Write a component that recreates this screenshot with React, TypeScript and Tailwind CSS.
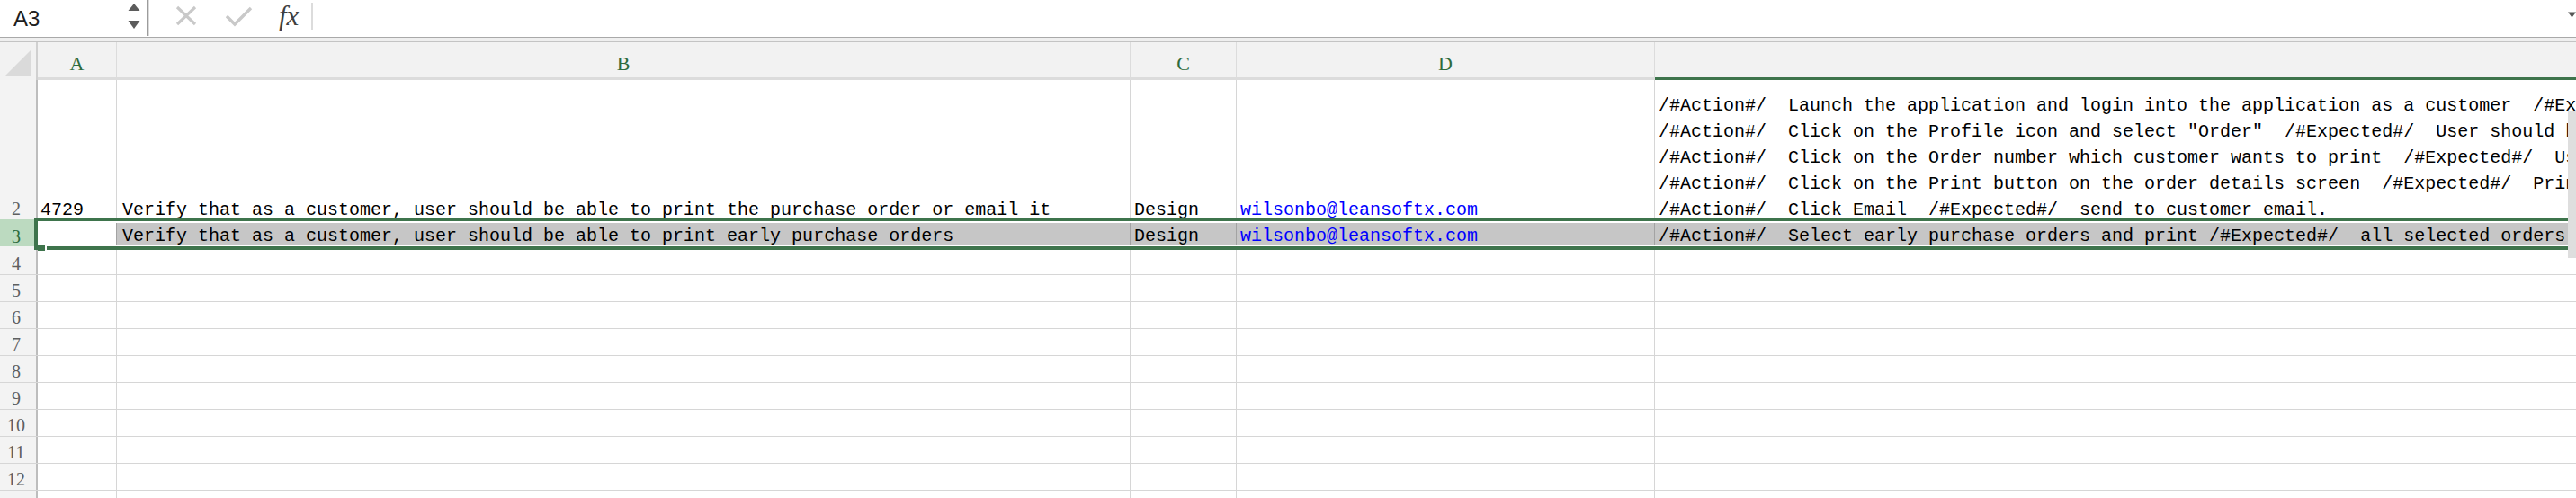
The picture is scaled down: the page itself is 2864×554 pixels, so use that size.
import React from 'react';

const GREEN = 'border-[#3e744c]';

const lines = [
  '/#Action#/  Launch the application and login into the application as a customer  /#Ex',
  '/#Action#/  Click on the Profile icon and select "Order"  /#Expected#/  User should b',
  '/#Action#/  Click on the Order number which customer wants to print  /#Expected#/  Us',
  '/#Action#/  Click on the Print button on the order details screen  /#Expected#/  Prin',
  '/#Action#/  Click Email  /#Expected#/  send to customer email.',
];

function RowNum({ n, active }: { n: number; active?: boolean }) {
  return (
    <div
      className={
        active
          ? 'w-[42px] shrink-0 flex items-end justify-center pr-[4px] pb-[1px] border-r-2 border-[#bdbdbd] bg-[#bcdac0] text-[#2e6b3d]'
          : 'w-[42px] shrink-0 flex items-end justify-center pr-[4px] pb-[2px] border-r-2 border-[#bdbdbd] bg-[#f3f3f3] text-[#5f5f5f]'
      }
    >
      <span className="font-['Liberation_Serif',serif] text-[20px] leading-[20px]">{n}</span>
    </div>
  );
}

function EmptyRow({ n, tall }: { n: number; tall?: boolean }) {
  return (
    <div className={tall ? 'flex h-[32px] border-b border-[#d6d6d6]' : 'flex h-[30px] border-b border-[#d6d6d6]'}>
      <RowNum n={n} />
      <div className="w-[88px] shrink-0 border-r border-[#d6d6d6]" />
      <div className="w-[1127px] shrink-0 border-r border-[#d6d6d6]" />
      <div className="w-[118px] shrink-0 border-r border-[#d6d6d6]" />
      <div className="w-[465px] shrink-0 border-r border-[#d6d6d6]" />
      <div className="flex-1" />
    </div>
  );
}

function FormulaBar() {
  return (
    <div className="flex h-[41px] bg-white">
      <div className="w-[163px] shrink-0 flex items-center pl-[15px]">
        <span className="font-['Liberation_Sans',sans-serif] text-[24px] text-[#1e1e1e]">A3</span>
        <svg className="ml-auto mr-[7px] mt-[-6px]" width="14" height="32" viewBox="0 0 14 32">
          <path d="M7 2 L13.5 10 L0.5 10 Z" fill="#5c5c5c" />
          <path d="M0.5 21 L13.5 21 L7 30 Z" fill="#5c5c5c" />
        </svg>
      </div>
      <div className="w-[3px] h-[40px] shrink-0 border-l-2 border-[#9c9c9c] bg-[#dadada]" />
      <div className="flex items-center h-[36px]">
        <svg className="ml-[29px]" width="24" height="24" viewBox="0 0 24 24">
          <path d="M2 2 L22 21 M22 2 L2 21" stroke="#c9c9c9" strokeWidth="3.2" fill="none" />
        </svg>
        <svg className="ml-[32px]" width="30" height="24" viewBox="0 0 30 24">
          <path d="M1 12 L10 21 L28 3" stroke="#c9c9c9" strokeWidth="3.4" fill="none" />
        </svg>
        <span className="ml-[29px] font-['Liberation_Serif',serif] italic text-[31px] leading-[36px] text-[#3f3f3f]">fx</span>
        <div className="ml-[14px] w-[2px] h-[30px] bg-[#dcdcdc]" />
      </div>
      <div className="ml-[14px] flex-1 h-[36px] bg-white" />
      <div className="w-[32px] flex items-start pt-[12px] pl-[23px] overflow-hidden">
        <svg width="14" height="9" viewBox="0 0 14 9">
          <path d="M0 0 L14 0 L7 9 Z" fill="#555" />
        </svg>
      </div>
    </div>
  );
}

function HeaderCell({ w, label }: { w: string; label: string }) {
  return (
    <div className={`${w} shrink-0 flex items-end justify-center pb-[4px] border-r border-[#dcdcdc] border-b-[3px] ${GREEN}`}>
      <span className="font-['Liberation_Serif',serif] text-[22px] leading-[22px] text-[#2e6b3d]">{label}</span>
    </div>
  );
}

export default function App() {
  const mono = "font-['Liberation_Mono',monospace] text-[20px] leading-[20px] whitespace-pre";
  return (
    <div className="relative w-[2864px] h-[554px] overflow-hidden bg-white">
      <FormulaBar />
      <div className="h-[6px] border-t border-b border-t-[#a9a9a9] border-b-[#c4c4c4] bg-[#efefef]" />

      {/* column headers */}
      <div className="flex h-[42px] bg-[#f2f2f2]">
        <div className="w-[42px] shrink-0 flex items-end justify-end pr-[6px] pb-[5px] border-r-2 border-[#d0d0d0]">
          <svg width="28" height="28" viewBox="0 0 28 28">
            <path d="M28 0 L28 28 L0 28 Z" fill="#dadada" />
          </svg>
        </div>
        <HeaderCell w="w-[88px]" label="A" />
        <HeaderCell w="w-[1127px]" label="B" />
        <HeaderCell w="w-[118px]" label="C" />
        <HeaderCell w="w-[465px]" label="D" />
        <div className={`flex-1 border-b-[3px] ${GREEN}`} />
      </div>

      {/* row 2 */}
      <div className="flex h-[155px]">
        <RowNum n={2} />
        <div className="w-[88px] shrink-0 flex items-end pl-[3px] border-r border-[#d6d6d6]">
          <span className={mono}>4729</span>
        </div>
        <div className="w-[1127px] shrink-0 flex items-end pl-[6px] border-r border-[#d6d6d6]">
          <span className={mono}>Verify that as a customer, user should be able to print the purchase order or email it</span>
        </div>
        <div className="w-[118px] shrink-0 flex items-end pl-[4px] border-r border-[#d6d6d6]">
          <span className={mono}>Design</span>
        </div>
        <div className="w-[465px] shrink-0 flex items-end pl-[4px] border-r border-[#d6d6d6]">
          <span className={`${mono} text-[#0000ff]`}>wilsonbo@leansoftx.com</span>
        </div>
        <div className="flex-1 min-w-0 flex flex-col justify-end pl-[4px]">
          <div className="mb-[-4px] font-['Liberation_Mono',monospace] text-[20px] leading-[29px] whitespace-pre text-black">
            {lines.map((l) => (
              <div key={l}>{l}</div>
            ))}
          </div>
        </div>
      </div>

      {/* row 3 (selected) */}
      <div className="relative flex h-[30px]">
        <RowNum n={3} active />
        <div className="w-[88px] shrink-0 bg-white border-r border-[#a3a3a3]" />
        <div className="w-[1127px] shrink-0 flex items-end pl-[6px] pb-[1px] bg-[#c6c6c6] border-r border-[#a3a3a3]">
          <span className={mono}>Verify that as a customer, user should be able to print early purchase orders</span>
        </div>
        <div className="w-[118px] shrink-0 flex items-end pl-[4px] pb-[1px] bg-[#c6c6c6] border-r border-[#a3a3a3]">
          <span className={mono}>Design</span>
        </div>
        <div className="w-[465px] shrink-0 flex items-end pl-[4px] pb-[1px] bg-[#c6c6c6] border-r border-[#a3a3a3]">
          <span className={`${mono} text-[#0000ff]`}>wilsonbo@leansoftx.com</span>
        </div>
        <div className="flex-1 min-w-0 flex items-end pl-[4px] pb-[1px] bg-[#c6c6c6]">
          <span className={mono}>/#Action#/  Select early purchase orders and print /#Expected#/  all selected orders</span>
        </div>
        {/* selection border */}
        <div className={`absolute left-[38px] right-[-10px] top-[-2px] bottom-[-4px] border-4 ${GREEN} shadow-[inset_0_0_0_2px_#ffffff]`} />
        <div className="absolute left-[42px] top-[28px] w-[8px] h-[7px] bg-[#3e744c]" />
        <div className="absolute left-[50px] top-[30px] w-[2px] h-[4px] bg-white" />
      </div>

      <EmptyRow n={4} tall />
      <EmptyRow n={5} />
      <EmptyRow n={6} />
      <EmptyRow n={7} />
      <EmptyRow n={8} />
      <EmptyRow n={9} />
      <EmptyRow n={10} />
      <EmptyRow n={11} />
      <EmptyRow n={12} />
      <EmptyRow n={13} />

      {/* scroll thumb at right edge */}
      <div className="absolute right-0 top-[123px] w-[9px] h-[164px] bg-[#dedede]" />
    </div>
  );
}
